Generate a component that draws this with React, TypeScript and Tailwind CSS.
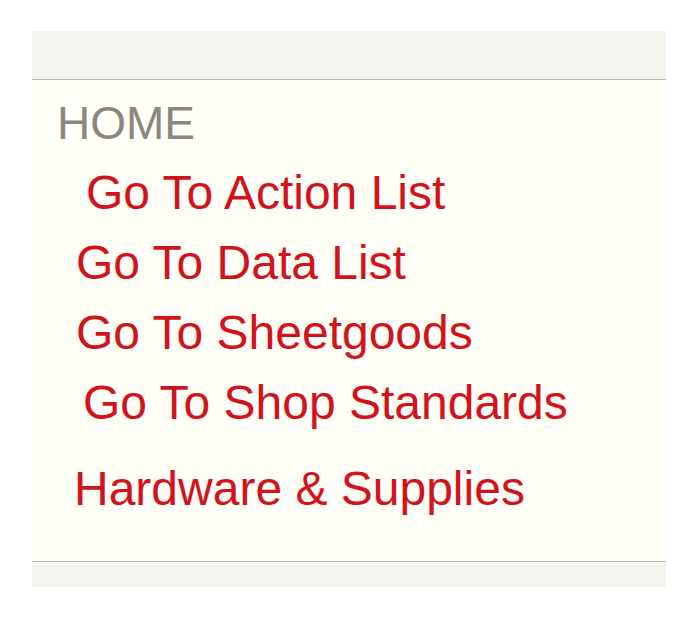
const links = [
  { label: "Go To Action List", indent: "pl-[54px]" },
  { label: "Go To Data List", indent: "pl-[44px]" },
  { label: "Go To Sheetgoods", indent: "pl-[44px]" },
  { label: "Go To Shop Standards", indent: "pl-[51px]" },
];

export default function App() {
  return (
    <div
      className="min-h-[619px] w-[698px] bg-white pt-[31px] pl-[32px]"
      style={{ fontFamily: '"Liberation Sans", Arial, sans-serif' }}
    >
      <div className="w-[634px]">
        <div className="h-[49px] border-b border-[#bab6b0] bg-[#f5f5f0]" />
        <div className="h-[481px] bg-[#fffef7] pt-[8px]">
          <div className="pl-[25px] text-[46px] leading-[70px] text-[#8b867f]">HOME</div>
          {links.map((l) => (
            <a
              key={l.label}
              href="#"
              className={`block ${l.indent} text-[48px] leading-[70px] text-[#d2131b]`}
            >
              {l.label}
            </a>
          ))}
          <a
            href="#"
            className="mt-[16px] block pl-[42px] text-[48px] leading-[70px] text-[#d2131b]"
          >
            Hardware &amp; Supplies
          </a>
        </div>
        <div className="h-[26px] border-t border-[#bab6b0] bg-[#f5f5f0]" />
      </div>
    </div>
  );
}
